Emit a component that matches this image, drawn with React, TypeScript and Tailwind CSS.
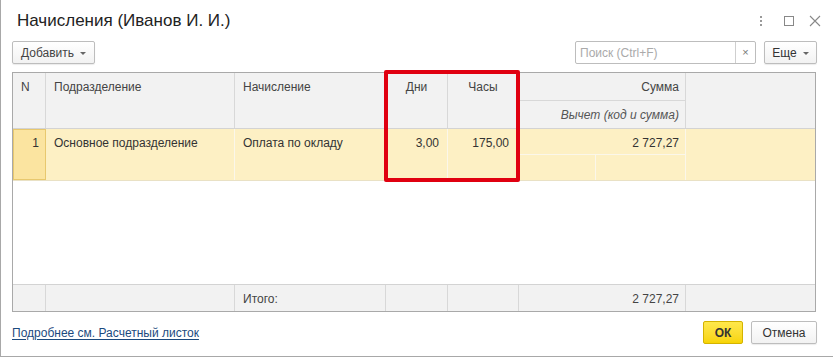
import React from "react";

const cols = "grid-cols-[33px_189px_151px_62px_71px_167px_129px]";

export default function App() {
  return (
    <div
      className="relative w-[833px] h-[357px] bg-white border-l border-b border-[#a8a8a8] overflow-hidden text-[#333]"
      style={{ fontFamily: '"Liberation Sans", Arial, sans-serif' }}
    >
      {/* Title bar */}
      <div className="flex items-center h-[41px] pl-[16px] pr-[11px]">
        <div className="text-[17px] text-[#222] flex-1 pt-[1px]">Начисления (Иванов И. И.)</div>
        <div className="flex items-center">
          <svg width="4" height="14" viewBox="0 0 4 14">
            <rect x="1" y="2" width="2" height="2" fill="#999" />
            <rect x="1" y="6" width="2" height="2" fill="#999" />
            <rect x="1" y="10" width="2" height="2" fill="#999" />
          </svg>
          <svg className="ml-[20px]" width="12" height="12" viewBox="0 0 12 12">
            <rect x="1.5" y="1.5" width="9" height="9" fill="none" stroke="#888" strokeWidth="1" />
          </svg>
          <svg className="ml-[13px]" width="14" height="14" viewBox="0 0 14 14">
            <path d="M2 2 L12 12 M12 2 L2 12" stroke="#888" strokeWidth="1.1" />
          </svg>
        </div>
      </div>

      {/* Toolbar */}
      <div className="flex items-center h-[23px] pl-[11px] pr-[16px]">
        <button className="h-[23px] w-[83px] border border-[#bdbdbd] rounded-[2px] bg-gradient-to-b from-white to-[#f2f2f2] text-[12px] text-[#444] flex items-center justify-center gap-[6px] shadow-[0_1px_1px_rgba(0,0,0,0.08)]">
          Добавить
          <span className="inline-block w-0 h-0 border-l-[3px] border-r-[3px] border-t-[3px] border-l-transparent border-r-transparent border-t-[#666] mt-[1px]" />
        </button>
        <div className="flex-1" />
        <div className="flex h-[23px] w-[181px] border border-[#bdbdbd] rounded-[2px] bg-white">
          <div className="flex-1 text-[12px] text-[#aaa] pl-[4px] flex items-center">Поиск (Ctrl+F)</div>
          <div className="w-[20px] border-l border-[#cfcfcf] flex items-center justify-center text-[11px] text-[#777]">×</div>
        </div>
        <button className="ml-[8px] h-[23px] w-[53px] border border-[#bdbdbd] rounded-[2px] bg-gradient-to-b from-white to-[#f2f2f2] text-[12px] text-[#333] flex items-center justify-center gap-[6px] shadow-[0_1px_1px_rgba(0,0,0,0.08)]">
          Еще
          <span className="inline-block w-0 h-0 border-l-[3px] border-r-[3px] border-t-[3px] border-l-transparent border-r-transparent border-t-[#666] mt-[1px]" />
        </button>
      </div>

      {/* Table */}
      <div className="ml-[11px] mt-[8px] w-[804px] h-[240px] border border-[#a9a9a9] flex flex-col text-[12px]">
        {/* Header */}
        <div className={`grid ${cols} h-[56px] bg-[#f2f2f2] border-b border-[#d3d3d3] text-[#444]`}>
          <div className="border-r border-[#d8d8d8] pl-[8px] pt-[5px]">N</div>
          <div className="border-r border-[#d8d8d8] pl-[8px] pt-[5px]">Подразделение</div>
          <div className="border-r border-[#d8d8d8] pl-[8px] pt-[5px]">Начисление</div>
          <div className="border-r border-[#d8d8d8] text-center pt-[5px]">Дни</div>
          <div className="border-r border-[#d8d8d8] text-center pt-[5px]">Часы</div>
          <div className="border-r border-[#d8d8d8] flex flex-col">
            <div className="h-[28px] border-b border-[#d8d8d8] text-right pr-[6px] pt-[5px]">Сумма</div>
            <div className="flex-1 text-right pr-[6px] pt-[5px] italic text-[#555]">Вычет (код и сумма)</div>
          </div>
          <div />
        </div>

        {/* Data row */}
        <div className={`grid ${cols} h-[52px] bg-[#fdf0c4] border-b border-[#e9e1c5] text-[#333]`}>
          <div className="bg-[#fbe4a0] border border-[#e8c86e] text-right pr-[6px] pt-[4px]">1</div>
          <div className="border-r border-[#fbf7ea] pl-[8px] pt-[5px]">Основное подразделение</div>
          <div className="border-r border-[#fbf7ea] pl-[8px] pt-[5px]">Оплата по окладу</div>
          <div className="border-r border-[#fbf7ea] text-right pr-[8px] pt-[5px]">3,00</div>
          <div className="border-r border-[#fbf7ea] text-right pr-[9px] pt-[5px]">175,00</div>
          <div className="border-r border-[#fbf7ea] flex flex-col">
            <div className="h-[26px] border-b border-[#fbf7ea] text-right pr-[6px] pt-[5px]">2 727,27</div>
            <div className="flex-1 grid grid-cols-[77px_1fr]">
              <div className="border-r border-[#fbf7ea]" />
              <div />
            </div>
          </div>
          <div />
        </div>

        <div className="flex-1" />

        {/* Footer */}
        <div className={`grid ${cols} h-[27px] bg-[#f2f2f2] border-t border-[#d3d3d3] text-[#444]`}>
          <div className="border-r border-[#d8d8d8]" />
          <div className="border-r border-[#d8d8d8]" />
          <div className="border-r border-[#d8d8d8] pl-[8px] pt-[5px]">Итого:</div>
          <div className="border-r border-[#d8d8d8]" />
          <div className="border-r border-[#d8d8d8]" />
          <div className="border-r border-[#d8d8d8] text-right pr-[6px] pt-[5px]">2 727,27</div>
          <div />
        </div>
      </div>

      {/* Bottom bar */}
      <div className="flex items-center pl-[11px] pr-[16px] mt-[9px] h-[23px]">
        <a className="text-[12px] text-[#1c4a7e] underline underline-offset-2 flex-1">Подробнее см. Расчетный листок</a>
        <button className="h-[23px] w-[40px] border border-[#d4b300] rounded-[2px] bg-gradient-to-b from-[#ffe84a] to-[#f7d400] text-[12px] font-bold text-[#333]">
          ОК
        </button>
        <button className="ml-[8px] h-[23px] w-[66px] border border-[#bdbdbd] rounded-[2px] bg-gradient-to-b from-white to-[#f2f2f2] text-[12px] text-[#333] shadow-[0_1px_1px_rgba(0,0,0,0.08)]">
          Отмена
        </button>
      </div>

      {/* Red highlight */}
      <div className="absolute left-[383px] top-[70px] w-[136px] h-[112px] border-[4px] border-[#e00010] rounded-[2px]" />
    </div>
  );
}
